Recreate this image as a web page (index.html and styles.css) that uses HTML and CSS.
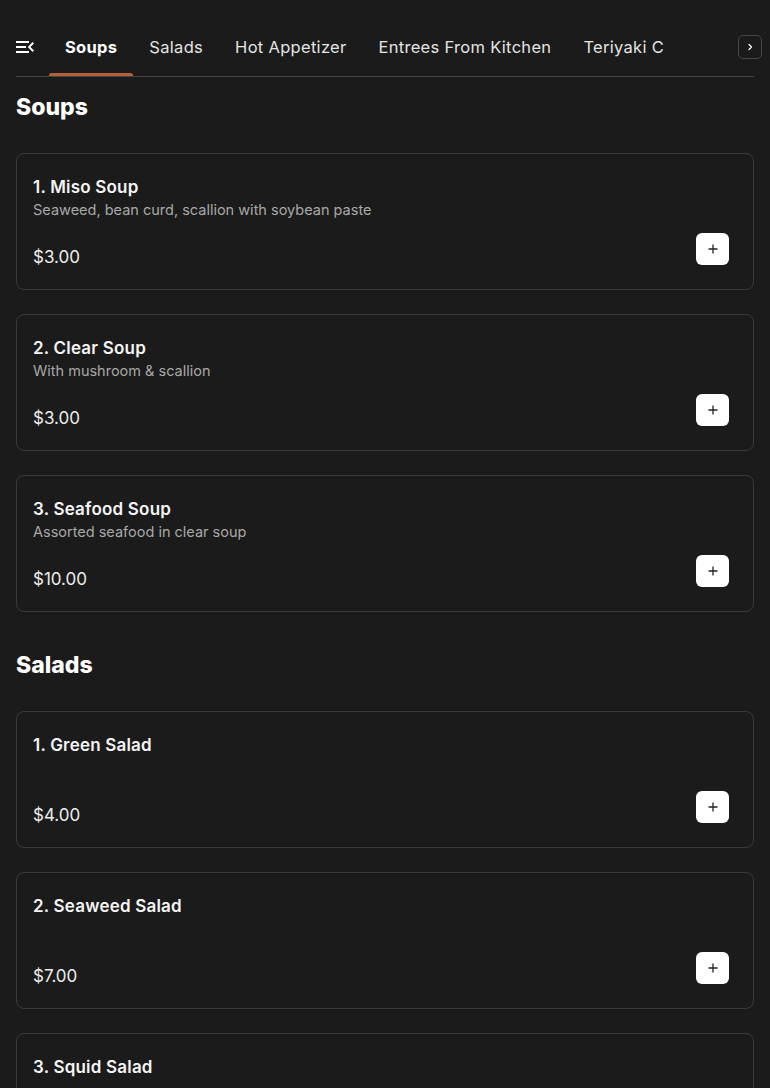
FILE: index.html
```html
<!DOCTYPE html>
<html lang="en">
<head>
<meta charset="utf-8">
<title>Menu</title>
<link rel="stylesheet" href="styles.css">
</head>
<body>
<nav class="nav">
  <button class="menu-btn" aria-label="Menu">
    <svg width="18" height="12" viewBox="3 6 18 12"><path fill="#fff" d="M3 18h13v-2H3v2zm0-5h10v-2H3v2zm0-7v2h13V6H3zm18 9.59L17.42 12 21 8.41 19.59 7 14.83 12l4.760 5L21 15.59z"/></svg>
  </button>
  <div class="tabs">
    <a class="tab active">Soups</a>
    <a class="tab">Salads</a>
    <a class="tab">Hot Appetizer</a>
    <a class="tab">Entrees From Kitchen</a>
    <a class="tab">Teriyaki C</a>
  </div>
  <button class="next-btn" aria-label="Next">
    <svg width="8" height="8" viewBox="0 0 8 8"><path d="M3 1.5 5.5 4 3 6.5" fill="none" stroke="#fff" stroke-width="1.2" stroke-linecap="round" stroke-linejoin="round"/></svg>
  </button>
</nav>
<main class="main">
  <section class="section">
    <h2 class="section-title">Soups</h2>
    <div class="cards">
      <div class="card">
        <div class="card-title">1. Miso Soup</div>
        <div class="card-desc">Seaweed, bean curd, scallion with soybean paste</div>
        <div class="card-foot"><span class="price">$3.00</span><button class="add" aria-label="Add"><svg width="12" height="12" viewBox="0 0 12 12"><path d="M6 1.5v9M1.5 6h9" stroke="#222" stroke-width="1.3"/></svg></button></div>
      </div>
      <div class="card">
        <div class="card-title">2. Clear Soup</div>
        <div class="card-desc">With mushroom &amp; scallion</div>
        <div class="card-foot"><span class="price">$3.00</span><button class="add" aria-label="Add"><svg width="12" height="12" viewBox="0 0 12 12"><path d="M6 1.5v9M1.5 6h9" stroke="#222" stroke-width="1.3"/></svg></button></div>
      </div>
      <div class="card">
        <div class="card-title">3. Seafood Soup</div>
        <div class="card-desc">Assorted seafood in clear soup</div>
        <div class="card-foot"><span class="price">$10.00</span><button class="add" aria-label="Add"><svg width="12" height="12" viewBox="0 0 12 12"><path d="M6 1.5v9M1.5 6h9" stroke="#222" stroke-width="1.3"/></svg></button></div>
      </div>
    </div>
  </section>
  <section class="section">
    <h2 class="section-title">Salads</h2>
    <div class="cards">
      <div class="card">
        <div class="card-title">1. Green Salad</div>
        <div class="card-desc"></div>
        <div class="card-foot"><span class="price">$4.00</span><button class="add" aria-label="Add"><svg width="12" height="12" viewBox="0 0 12 12"><path d="M6 1.5v9M1.5 6h9" stroke="#222" stroke-width="1.3"/></svg></button></div>
      </div>
      <div class="card">
        <div class="card-title">2. Seaweed Salad</div>
        <div class="card-desc"></div>
        <div class="card-foot"><span class="price">$7.00</span><button class="add" aria-label="Add"><svg width="12" height="12" viewBox="0 0 12 12"><path d="M6 1.5v9M1.5 6h9" stroke="#222" stroke-width="1.3"/></svg></button></div>
      </div>
      <div class="card">
        <div class="card-title">3. Squid Salad</div>
        <div class="card-desc"></div>
        <div class="card-foot"><span class="price">$8.00</span><button class="add" aria-label="Add"><svg width="12" height="12" viewBox="0 0 12 12"><path d="M6 1.5v9M1.5 6h9" stroke="#222" stroke-width="1.3"/></svg></button></div>
      </div>
    </div>
  </section>
</main>
</body>
</html>
```
FILE: styles.css
```css
* { box-sizing: border-box; }
html, body { margin: 0; background: #1b1b1b; }
body {
  font-family: Inter, "Noto Sans", sans-serif;
  color: #f2f2f2;
}
button { font: inherit; border: 0; padding: 0; background: none; cursor: pointer; }

.nav {
  display: flex;
  align-items: stretch;
  margin: 0 16px;
  padding-top: 18px;
  height: 77px;
  border-bottom: 1px solid #444;
}
.menu-btn {
  display: flex;
  align-items: center;
  width: 18px;
}
.tabs {
  display: flex;
  margin-left: 15px;
  width: 630px;
  overflow: hidden;
}
.tab {
  position: relative;
  display: flex;
  align-items: center;
  padding: 0 16px;
  font-size: 16.5px;
  letter-spacing: 0.3px;
  color: #e4e4e4;
  white-space: nowrap;
}
.tab.active { font-weight: 700; color: #fff; }
.tab.active::after {
  content: "";
  position: absolute;
  left: 0;
  right: 0;
  bottom: -1px;
  height: 4px;
  border-radius: 3px 3px 2px 2px;
  background: #b5603d;
}
.next-btn {
  align-self: center;
  margin-left: auto;
  margin-right: -8px;
  width: 24px;
  height: 24px;
  border: 1px solid #464646;
  border-radius: 5px;
  display: flex;
  align-items: center;
  justify-content: center;
}

.main { padding: 15px 16px 0; }
.section { margin-bottom: 38px; }
.section-title {
  margin: 0 0 30px;
  font-size: 23px;
  line-height: 31px;
  font-weight: 800;
  color: #fff;
}
.cards { display: flex; flex-direction: column; gap: 24px; }
.card {
  border: 1px solid #3a3a3a;
  border-radius: 8px;
  padding: 24px 24px 24px 16px;
}
.card-title {
  font-size: 17px;
  line-height: 18px;
  font-weight: 600;
  letter-spacing: 0.2px;
  color: #f4f4f4;
}
.card-desc {
  margin-top: 4px;
  min-height: 20px;
  font-size: 14.5px;
  line-height: 20px;
  color: #a8a8a8;
}
.card-foot {
  margin-top: 13px;
  display: flex;
  justify-content: space-between;
  align-items: flex-end;
}
.price {
  font-size: 17px;
  line-height: 20px;
  margin-bottom: -2px;
  color: #ececec;
}
.add {
  width: 33px;
  height: 32px;
  border-radius: 6px;
  background: #fff;
  display: flex;
  align-items: center;
  justify-content: center;
}
```
